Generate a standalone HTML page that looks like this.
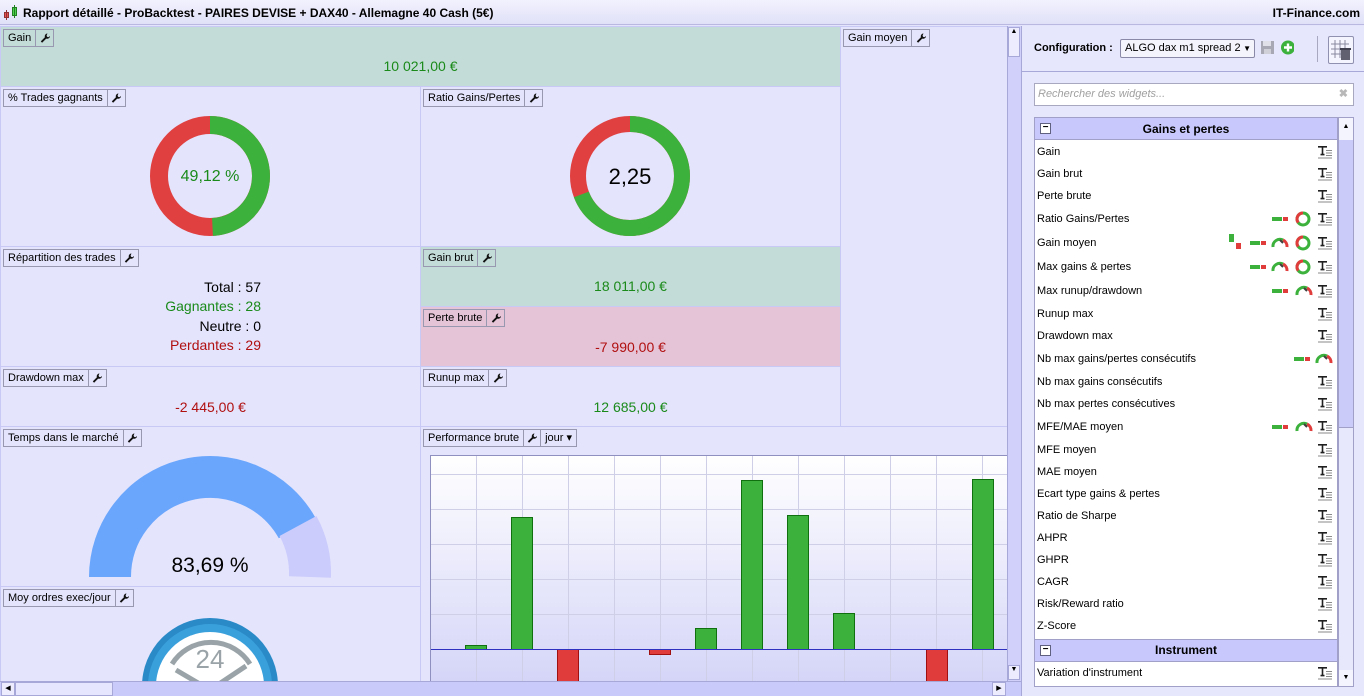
<!DOCTYPE html>
<html><head><meta charset="utf-8"><style>
*{margin:0;padding:0;box-sizing:border-box}
html,body{width:1364px;height:696px;overflow:hidden}
body{background:#e4e4fc;font-family:"Liberation Sans",sans-serif;font-size:12px;color:#000;position:relative}
.a{position:absolute}
.p{position:absolute;background:#e4e4fd;border:1px solid #c9c9f5}
.lab{position:absolute;left:2px;top:2px;height:18px;border:1px solid #9898b0;display:flex;font-size:11px;line-height:16px}
.lab span{padding:0 4px;border-right:1px solid #9898b0}
.lab span:last-child{border-right:none}
.lab b{width:17px;border-right:1px solid #9898b0;display:flex;align-items:center;justify-content:center}
.lab b:last-child{border-right:none}
.v{position:absolute;width:100%;text-align:center;font-size:14px}
.g{color:#1a8a1a}.r{color:#b01010}
.row{position:absolute;left:1037px;width:299px;height:22px;line-height:22px;font-size:11px}
.ti{position:absolute;right:2px;top:5px}
</style></head><body>
<svg width="0" height="0" style="position:absolute;left:0;top:0"><defs>
<g id="W"><path d="M7.5 0.5a2.8 2.8 0 0 0-2.6 3.8L0.8 8.4l1.3 1.3 4.1-4.1a2.8 2.8 0 0 0 3.8-2.6l-1.6 1.2-1.4-0.4-0.4-1.4z" fill="#111"/></g>
<g id="T"><path d="M0 0.8h9M4.5 0.8v8M2.5 8.6h4" stroke="#202020" stroke-width="1.6" fill="none"/><path d="M8 4.5h6M8 7h6M8 9.5h6M0 12h14" stroke="#8a8a8a"/></g>
<g id="B"><rect x="0" y="2" width="10" height="4" fill="#3cb23c"/><rect x="11" y="2" width="5" height="4" fill="#e03c3c"/></g>
<g id="D"><circle cx="7" cy="7" r="6" fill="none" stroke="#3cb23c" stroke-width="3"/><path d="M7 1A6 6 0 0 0 2.2 10.6" fill="none" stroke="#e03c3c" stroke-width="3"/></g>
<g id="G"><path d="M1 10A7 7 0 0 1 11 3" fill="none" stroke="#3cb23c" stroke-width="3"/><path d="M11 3A7 7 0 0 1 15 10" fill="none" stroke="#e03c3c" stroke-width="3"/><path d="M8 3l3 3" stroke="#404040" stroke-width="2"/></g>
</defs></svg>
<!-- title bar -->
<div class="a" style="left:0;top:0;width:1364px;height:25px;background:linear-gradient(#f2f2fe,#e0e0f8);border-bottom:1px solid #b8b8e0"></div>
<svg class="a" style="left:3px;top:5px" width="16" height="15"><rect x="1.5" y="7.5" width="4" height="5" fill="#e85050" stroke="#903030"/><line x1="3.5" y1="5" x2="3.5" y2="15" stroke="#903030"/><rect x="9.5" y="2.5" width="4" height="8" fill="#50d050" stroke="#208020"/><line x1="11.5" y1="0" x2="11.5" y2="13" stroke="#208020"/></svg>
<div class="a" style="left:23px;top:6px;font-size:12px;font-weight:bold">Rapport détaillé - ProBacktest - PAIRES DEVISE + DAX40 - Allemagne 40 Cash (5€)</div>
<div class="a" style="left:1250px;top:6px;width:110px;text-align:right;font-weight:bold">IT-Finance.com</div>

<!-- panels -->
<div class="p" style="left:0;top:26px;width:841px;height:61px;background:#c4dcd8"><div class="lab"><span>Gain</span><b><svg width="10" height="10"><use href="#W"/></svg></b></div><div class="v g" style="top:31px">10 021,00 €</div></div>
<div class="p" style="left:840px;top:26px;width:168px;height:401px"><div class="lab"><span>Gain moyen</span><b><svg width="10" height="10"><use href="#W"/></svg></b></div></div>
<div class="p" style="left:0;top:86px;width:421px;height:161px"><div class="lab"><span>% Trades gagnants</span><b><svg width="10" height="10"><use href="#W"/></svg></b></div></div>
<div class="p" style="left:420px;top:86px;width:421px;height:161px"><div class="lab"><span>Ratio Gains/Pertes</span><b><svg width="10" height="10"><use href="#W"/></svg></b></div></div>
<div class="p" style="left:0;top:246px;width:421px;height:121px"><div class="lab"><span>Répartition des trades</span><b><svg width="10" height="10"><use href="#W"/></svg></b></div>
<div class="a" style="left:0;width:260px;top:31px;text-align:right;font-size:14px;line-height:19.3px"><div>Total : 57</div><div class="g">Gagnantes : 28</div><div>Neutre : 0</div><div class="r">Perdantes : 29</div></div></div>
<div class="p" style="left:420px;top:246px;width:421px;height:61px;background:#c4dcd8"><div class="lab"><span>Gain brut</span><b><svg width="10" height="10"><use href="#W"/></svg></b></div><div class="v g" style="top:31px">18 011,00 €</div></div>
<div class="p" style="left:420px;top:306px;width:421px;height:61px;background:#e6c4d8"><div class="lab"><span>Perte brute</span><b><svg width="10" height="10"><use href="#W"/></svg></b></div><div class="v r" style="top:32px">-7 990,00 €</div></div>
<div class="p" style="left:0;top:366px;width:421px;height:61px"><div class="lab"><span>Drawdown max</span><b><svg width="10" height="10"><use href="#W"/></svg></b></div><div class="v r" style="top:32px">-2 445,00 €</div></div>
<div class="p" style="left:420px;top:366px;width:421px;height:61px"><div class="lab"><span>Runup max</span><b><svg width="10" height="10"><use href="#W"/></svg></b></div><div class="v g" style="top:32px">12 685,00 €</div></div>
<div class="p" style="left:0;top:426px;width:421px;height:161px"><div class="lab"><span>Temps dans le marché</span><b><svg width="10" height="10"><use href="#W"/></svg></b></div></div>
<div class="p" style="left:0;top:586px;width:421px;height:100px;overflow:hidden"><div class="lab"><span>Moy ordres exec/jour</span><b><svg width="10" height="10"><use href="#W"/></svg></b></div></div>
<div class="p" style="left:420px;top:426px;width:588px;height:260px"><div class="lab"><span>Performance brute</span><b><svg width="10" height="10"><use href="#W"/></svg></b><span>jour ▾</span></div></div>

<!-- donuts & gauge -->
<svg class="a" style="left:0;top:0" width="1008" height="681">
<g transform="rotate(-90 210 176)"><circle cx="210" cy="176" r="51" fill="none" stroke="#e04040" stroke-width="18"/><circle cx="210" cy="176" r="51" fill="none" stroke="#3cb23c" stroke-width="18" stroke-dasharray="157.4 400"/></g>
<text x="210" y="181" font-size="16" fill="#1a8a1a" text-anchor="middle" font-family="Liberation Sans">49,12 %</text>
<g transform="rotate(-90 630 176)"><circle cx="630" cy="176" r="52" fill="none" stroke="#e04040" stroke-width="16"/><circle cx="630" cy="176" r="52" fill="none" stroke="#3cb23c" stroke-width="16" stroke-dasharray="226 400"/></g>
<text x="630" y="184" font-size="22" fill="#000" text-anchor="middle" font-family="Liberation Sans">2,25</text>
<path d="M110 577 A100 100 0 0 1 297.1 527.9" fill="none" stroke="#6aa6fc" stroke-width="42"/>
<path d="M298 526 A100 100 0 0 1 310 577" fill="none" stroke="#ccccfc" stroke-width="42"/>
<text x="210" y="572" font-size="21" text-anchor="middle" font-family="Liberation Sans">83,69 %</text>
<defs><clipPath id="cc"><rect x="0" y="600" width="420" height="81"/></clipPath></defs>
<g clip-path="url(#cc)"><circle cx="210" cy="686" r="68" fill="#2a8ac8"/><circle cx="210" cy="686" r="62" fill="#3aa0dc"/><circle cx="210" cy="686" r="54" fill="#fff"/>
<path d="M172 664 A46 46 0 0 1 250 664" fill="none" stroke="#9aa4a8" stroke-width="5"/><path d="M176 670 L210 690 L246 666" fill="none" stroke="#9aa4a8" stroke-width="5"/>
<text x="210" y="668" font-size="26" fill="#9aa4a8" text-anchor="middle" font-family="Liberation Sans">24</text></g>
<defs><linearGradient id="cg" x1="0" y1="0" x2="0" y2="1"><stop offset="0" stop-color="#fff"/><stop offset="1" stop-color="#d4d4f8"/></linearGradient></defs>
<rect x="430.5" y="455.5" width="580" height="230" fill="url(#cg)" stroke="#9090c0"/>
<g stroke="#cfcfe8"><line x1="476.5" y1="456" x2="476.5" y2="681"/><line x1="522.5" y1="456" x2="522.5" y2="681"/><line x1="568.5" y1="456" x2="568.5" y2="681"/><line x1="614.5" y1="456" x2="614.5" y2="681"/><line x1="660.5" y1="456" x2="660.5" y2="681"/><line x1="706.5" y1="456" x2="706.5" y2="681"/><line x1="752.5" y1="456" x2="752.5" y2="681"/><line x1="798.5" y1="456" x2="798.5" y2="681"/><line x1="844.5" y1="456" x2="844.5" y2="681"/><line x1="890.5" y1="456" x2="890.5" y2="681"/><line x1="936.5" y1="456" x2="936.5" y2="681"/><line x1="982.5" y1="456" x2="982.5" y2="681"/>
<line x1="431" y1="474.5" x2="1008" y2="474.5"/><line x1="431" y1="509.5" x2="1008" y2="509.5"/><line x1="431" y1="544.5" x2="1008" y2="544.5"/><line x1="431" y1="579.5" x2="1008" y2="579.5"/><line x1="431" y1="614.5" x2="1008" y2="614.5"/></g>
<g fill="#3cb23c" stroke="#107010"><rect x="465.5" y="645.5" width="21" height="4"/><rect x="511.5" y="517.5" width="21" height="132"/><rect x="695.5" y="628.5" width="21" height="21"/><rect x="741.5" y="480.5" width="21" height="169"/><rect x="787.5" y="515.5" width="21" height="134"/><rect x="833.5" y="613.5" width="21" height="36"/><rect x="972.5" y="479.5" width="21" height="170"/></g>
<g fill="#e03c3c" stroke="#a01010"><rect x="557.5" y="649.5" width="21" height="35"/><rect x="649.5" y="649.5" width="21" height="5"/><rect x="926.5" y="649.5" width="21" height="35"/></g>
<line x1="431" y1="649.5" x2="1008" y2="649.5" stroke="#3030c0"/>
</svg>

<!-- scrollbars -->
<div class="a" style="left:1007px;top:26px;width:14px;height:656px;background:#d0d0fa;border-left:1px solid #a8a8d8"></div>
<div class="a" style="left:1008px;top:27px;width:12px;height:30px;background:#ececfe;border:1px solid #a8a8d8;font-size:7px;text-align:center">▲</div>
<div class="a" style="left:1008px;top:665px;width:12px;height:15px;background:#ececfe;border:1px solid #a8a8d8;font-size:7px;text-align:center">▼</div>
<div class="a" style="left:0;top:681px;width:1021px;height:15px;background:#cacafa;border-top:1px solid #a8a8d8"></div>
<div class="a" style="left:1px;top:682px;width:14px;height:14px;background:#ececfe;border:1px solid #a8a8d8;font-size:7px;line-height:12px;text-align:center">◀</div>
<div class="a" style="left:15px;top:682px;width:98px;height:14px;background:#e6e6fe;border:1px solid #a8a8d8"></div>
<div class="a" style="left:992px;top:682px;width:14px;height:14px;background:#ececfe;border:1px solid #a8a8d8;font-size:7px;line-height:12px;text-align:center">▶</div>

<!-- right panel -->
<div class="a" style="left:1021px;top:26px;width:343px;height:670px;background:#e6e6fc;border-left:1px solid #a8a8d8"></div>
<div class="a" style="left:1022px;top:71px;width:342px;height:1px;background:#a8a8d8"></div>
<div class="a" style="left:1034px;top:42px;font-weight:bold;font-size:11px">Configuration :</div>
<div class="a" style="left:1120px;top:39px;width:135px;height:19px;background:#f4f4fc;border:1px solid #8a8aa8;border-radius:2px;font-size:11px;line-height:17px;padding-left:4px">ALGO dax m1 spread 2 <span style="position:absolute;right:3px;font-size:8px">▼</span></div>
<svg class="a" style="left:1260px;top:40px" width="34" height="16"><rect x="1" y="1" width="13" height="13" fill="#a8a8b4"/><rect x="3" y="1" width="8" height="5" fill="#e0e0e8"/><rect x="4" y="9" width="7" height="5" fill="#d0d0d8"/><circle cx="28" cy="7.5" r="7" fill="#3cb23c"/><path d="M28 3.5v8M24 7.5h8" stroke="#fff" stroke-width="2.4"/></svg>
<div class="a" style="left:1317px;top:36px;width:1px;height:26px;background:#a8a8c0"></div>
<div class="a" style="left:1328px;top:36px;width:26px;height:28px;background:#f4f4fe;border:1px solid #9090b0;border-radius:2px"></div>
<svg class="a" style="left:1331px;top:40px" width="22" height="22"><g stroke="#8888a0"><path d="M0 4h18M0 9h18M0 14h18M4 0v18M9 0v18M14 0v18"/></g><rect x="10" y="10" width="9" height="10" fill="#606070"/><rect x="9" y="8" width="11" height="2" fill="#404050"/></svg>
<div class="a" style="left:1034px;top:83px;width:320px;height:23px;background:#fff;border:1px solid #a8a8c0;font-style:italic;color:#a0a0a0;font-size:11px;line-height:21px;padding-left:3px">Rechercher des widgets...<span style="position:absolute;right:5px;color:#b8b8b8;font-style:normal;font-weight:bold">✖</span></div>

<div class="a" style="left:1034px;top:117px;width:304px;height:570px;background:#fff;border:1px solid #a0a0c8"></div>
<div class="a" style="left:1338px;top:117px;width:16px;height:570px;background:#e8e8fd;border:1px solid #a0a0c8"></div>
<div class="a" style="left:1339px;top:140px;width:14px;height:288px;background:#cbcbfa;border-bottom:1px solid #a0a0c8"></div>
<div class="a" style="left:1339px;top:118px;width:14px;height:22px;background:#f4f4fe;font-size:7px;text-align:center;line-height:18px">▲</div>
<div class="a" style="left:1339px;top:670px;width:14px;height:16px;background:#f4f4fe;font-size:7px;text-align:center;line-height:16px">▼</div>
<div class="a" style="left:1035px;top:118px;width:302px;height:22px;background:#c8c8fc;border-bottom:1px solid #a0a0c8;text-align:center;font-weight:bold;line-height:22px">Gains et pertes<div class="a" style="left:5px;top:5px;width:11px;height:11px;border:1px solid #606080;background:#fff;line-height:7px;font-size:10px">−</div></div>
<div class="a" style="left:1035px;top:639px;width:302px;height:23px;background:#c8c8fc;border-top:1px solid #a0a0c8;border-bottom:1px solid #a0a0c8;text-align:center;font-weight:bold;line-height:21px">Instrument<div class="a" style="left:5px;top:5px;width:11px;height:11px;border:1px solid #606080;background:#fff;line-height:7px;font-size:10px">−</div></div>

<div class="row" style="top:141px">Gain<svg class="ti" width="16" height="14"><use href="#T"/></svg></div>
<div class="row" style="top:163px">Gain brut<svg class="ti" width="16" height="14"><use href="#T"/></svg></div>
<div class="row" style="top:185px">Perte brute<svg class="ti" width="16" height="14"><use href="#T"/></svg></div>
<div class="row" style="top:208px">Ratio Gains/Pertes<svg class="ti" width="62" height="16" style="top:3px"><use href="#B" y="4"/><use href="#D" x="24" y="1"/><use href="#T" x="46" y="2"/></svg></div>
<div class="row" style="top:232px">Gain moyen<svg class="ti" width="106" height="18" style="top:2px"><rect x="1" y="0" width="5" height="8" fill="#3cb23c"/><rect x="8" y="9" width="5" height="6" fill="#e03c3c"/><use href="#B" x="22" y="5"/><use href="#G" x="44" y="3"/><use href="#D" x="68" y="2"/><use href="#T" x="90" y="3"/></svg></div>
<div class="row" style="top:256px">Max gains &amp; pertes<svg class="ti" width="84" height="16" style="top:3px"><use href="#B" y="4"/><use href="#G" x="22" y="2"/><use href="#D" x="46" y="1"/><use href="#T" x="68" y="2"/></svg></div>
<div class="row" style="top:280px">Max runup/drawdown<svg class="ti" width="62" height="16" style="top:3px"><use href="#B" y="4"/><use href="#G" x="24" y="2"/><use href="#T" x="46" y="2"/></svg></div>
<div class="row" style="top:303px">Runup max<svg class="ti" width="16" height="14"><use href="#T"/></svg></div>
<div class="row" style="top:325px">Drawdown max<svg class="ti" width="16" height="14"><use href="#T"/></svg></div>
<div class="row" style="top:348px">Nb max gains/pertes consécutifs<svg class="ti" width="40" height="16" style="top:3px"><use href="#B" y="4"/><use href="#G" x="22" y="2"/></svg></div>
<div class="row" style="top:371px">Nb max gains consécutifs<svg class="ti" width="16" height="14"><use href="#T"/></svg></div>
<div class="row" style="top:393px">Nb max pertes consécutives<svg class="ti" width="16" height="14"><use href="#T"/></svg></div>
<div class="row" style="top:416px">MFE/MAE moyen<svg class="ti" width="62" height="16" style="top:3px"><use href="#B" y="4"/><use href="#G" x="24" y="2"/><use href="#T" x="46" y="2"/></svg></div>
<div class="row" style="top:439px">MFE moyen<svg class="ti" width="16" height="14"><use href="#T"/></svg></div>
<div class="row" style="top:461px">MAE moyen<svg class="ti" width="16" height="14"><use href="#T"/></svg></div>
<div class="row" style="top:483px">Ecart type gains &amp; pertes<svg class="ti" width="16" height="14"><use href="#T"/></svg></div>
<div class="row" style="top:505px">Ratio de Sharpe<svg class="ti" width="16" height="14"><use href="#T"/></svg></div>
<div class="row" style="top:527px">AHPR<svg class="ti" width="16" height="14"><use href="#T"/></svg></div>
<div class="row" style="top:549px">GHPR<svg class="ti" width="16" height="14"><use href="#T"/></svg></div>
<div class="row" style="top:571px">CAGR<svg class="ti" width="16" height="14"><use href="#T"/></svg></div>
<div class="row" style="top:593px">Risk/Reward ratio<svg class="ti" width="16" height="14"><use href="#T"/></svg></div>
<div class="row" style="top:615px">Z-Score<svg class="ti" width="16" height="14"><use href="#T"/></svg></div>
<div class="row" style="top:662px">Variation d'instrument<svg class="ti" width="16" height="14"><use href="#T"/></svg></div>
</body></html>
